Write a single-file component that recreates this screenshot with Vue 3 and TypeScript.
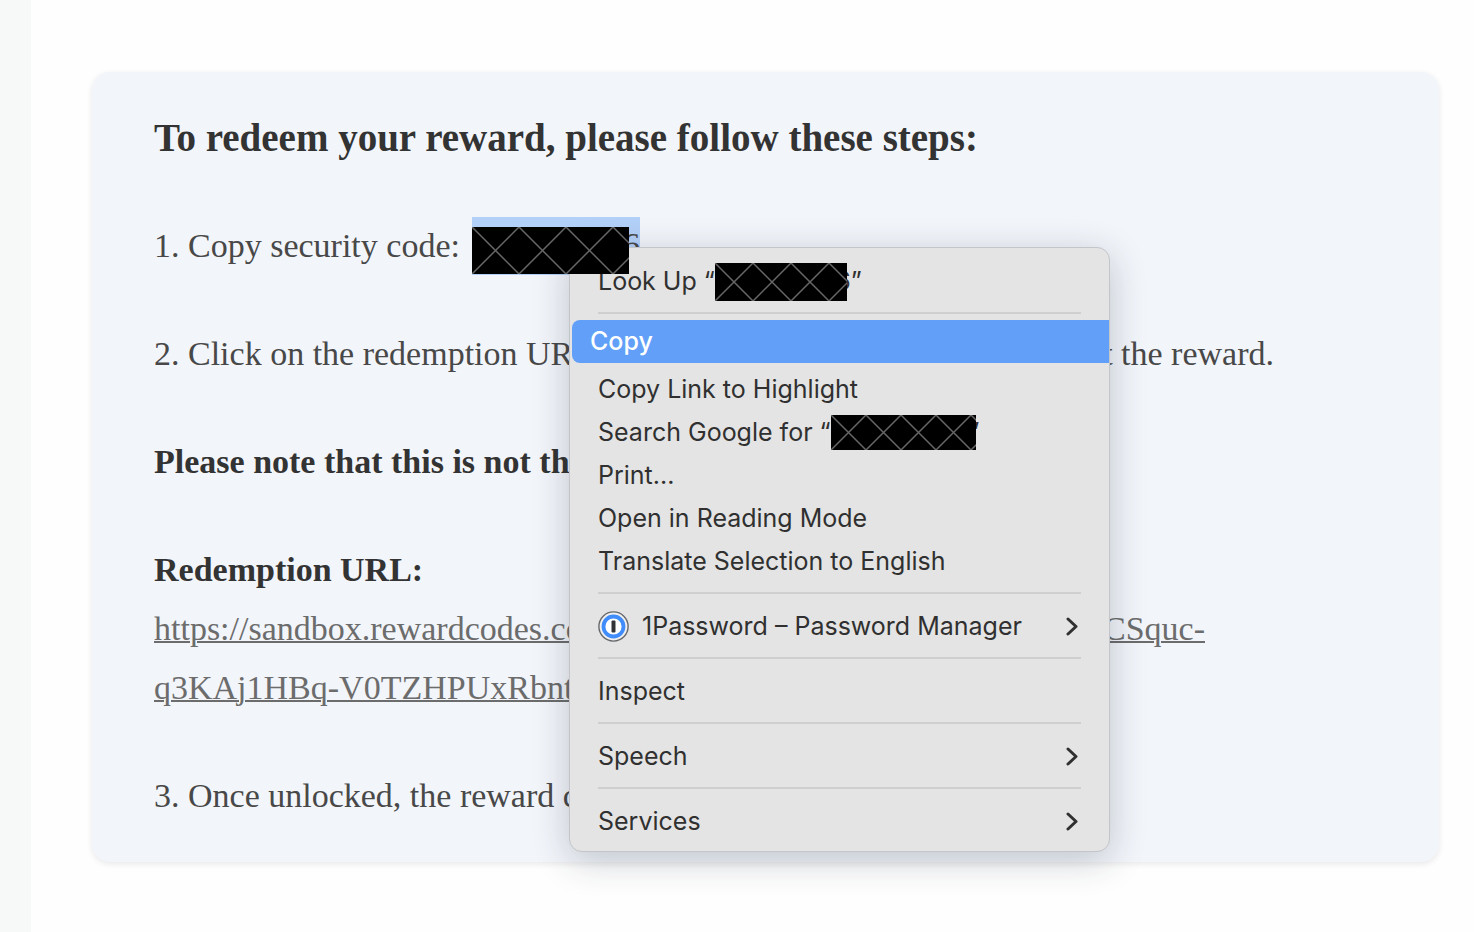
<script setup lang="ts">
import { defineComponent, h } from 'vue'

const Redaction = defineComponent({
  props: {
    width: { type: Number, required: true },
    height: { type: Number, required: true },
  },
  setup(props) {
    return () => {
      const { width, height } = props
      let d = ''
      for (let x = 0; x < width; x += height) {
        d += `M${x} 0l${height} ${height}M${x} ${height}l${height} ${-height}`
      }
      return h('svg', { width, height, viewBox: `0 0 ${width} ${height}`, 'aria-label': 'Redacted', role: 'img' }, [
        h('rect', { width, height, fill: '#000' }),
        h('path', { d, stroke: '#666', 'stroke-width': 1.5, fill: 'none' }),
      ])
    }
  },
})
</script>

<template>
  <div class="page">
    <main class="sheet">
      <section class="card">
        <h1>To redeem your reward, please follow these steps:</h1>
        <p class="code">
          <span>1. Copy security code:</span>
          <span class="selection"><Redaction class="cover" :width="157" :height="47" /><span class="digit">6</span></span>
        </p>
        <p class="split step">
          <span>2. Click on the redemption URL</span>
          <span>t the reward.</span>
        </p>
        <p><strong>Please note that this is not the</strong></p>
        <div class="link-block">
          <strong>Redemption URL:</strong>
          <a href="#redeem">
            <span class="split url"><span>https://sandbox.rewardcodes.co</span><span>CSquc-</span></span>
            <span>q3KAj1HBq-V0TZHPUxRbnt</span>
          </a>
        </div>
        <p>3. Once unlocked, the reward c</p>
      </section>
    </main>

    <div class="menu" role="menu">
      <button role="menuitem">Look Up “<Redaction class="cover" :width="132" :height="38" /><span class="tail">6</span>”</button>
      <hr />
      <button role="menuitem" class="active">Copy</button>
      <button role="menuitem">Copy Link to Highlight</button>
      <button role="menuitem">Search Google for “<Redaction class="cover" :width="145" :height="35" /><span class="quote">”</span></button>
      <button role="menuitem">Print...</button>
      <button role="menuitem">Open in Reading Mode</button>
      <button role="menuitem">Translate Selection to English</button>
      <hr />
      <button role="menuitem">
        <svg class="logo" width="32" height="32" viewBox="0 0 32 32" aria-hidden="true">
          <circle cx="15.5" cy="15.5" r="14.6" fill="#f0f0f0" stroke="#66686b" stroke-width="1.4" />
          <circle cx="15.5" cy="15.5" r="10" fill="#fff" stroke="#3f8cfa" stroke-width="3.8" />
          <rect x="13.5" y="9.5" width="4" height="12" rx="1" fill="#303236" />
        </svg>
        <span>1Password – Password Manager</span>
        <svg class="chevron" width="14" height="20" viewBox="0 0 14 20" aria-hidden="true"><path d="M3 2l8 7.5L3 17" /></svg>
      </button>
      <hr />
      <button role="menuitem">Inspect</button>
      <hr />
      <button role="menuitem">
        <span>Speech</span>
        <svg class="chevron" width="14" height="20" viewBox="0 0 14 20" aria-hidden="true"><path d="M3 2l8 7.5L3 17" /></svg>
      </button>
      <hr />
      <button role="menuitem">
        <span>Services</span>
        <svg class="chevron" width="14" height="20" viewBox="0 0 14 20" aria-hidden="true"><path d="M3 2l8 7.5L3 17" /></svg>
      </button>
    </div>
  </div>
</template>

<style>
body {
  margin: 0;
  background: #fefefe;
}
</style>

<style scoped>
.page {
  position: relative;
  min-height: 100vh;
  box-sizing: border-box;
  border-left: 31px solid #f7f9f8;
  overflow: hidden;
}
.sheet {
  padding: 72px 35px 70px 61px;
}
.card {
  box-sizing: border-box;
  padding: 36px 62px 37px;
  border-radius: 18px;
  background: #f2f5fa;
  box-shadow: 0 2px 6px rgba(0, 0, 0, 0.09);
  font-family: "Liberation Serif", "Times New Roman", serif;
  font-size: 34px;
  line-height: 59px;
  color: #484848;
}
h1 {
  margin: 0 0 49px;
  font-size: 39px;
  line-height: 59px;
  color: #333;
  white-space: nowrap;
}
p,
.link-block {
  margin: 0 0 49px;
  white-space: nowrap;
}
.card p:last-child {
  margin-bottom: 0;
}
strong {
  display: block;
  color: #333;
}
.code {
  display: flex;
  align-items: flex-end;
  gap: 12px;
}
.split {
  display: flex;
  justify-content: space-between;
}
.step {
  max-width: 1120px;
}
.url {
  max-width: 1051px;
}
a {
  display: block;
  color: #6c6c6c;
  text-decoration: underline;
  text-decoration-thickness: 2px;
}
.selection {
  display: flex;
  box-sizing: border-box;
  align-items: flex-end;
  width: 168px;
  height: 58px;
  padding-bottom: 1px;
  background: #b3d0f8;
}
.cover {
  position: relative;
  z-index: 2;
  flex: none;
}
.digit {
  display: flex;
  justify-content: flex-end;
  align-self: flex-start;
  width: 11px;
  line-height: 56px;
}
.menu {
  position: absolute;
  top: 247px;
  left: 538px;
  box-sizing: border-box;
  width: 541px;
  padding: 12px 0 8px;
  border: 1px solid #c3c5c9;
  border-radius: 13px;
  background: #e4e4e4;
  box-shadow: 0 8px 36px rgba(30, 40, 60, 0.24);
  z-index: 1;
}
button {
  display: flex;
  align-items: center;
  width: 100%;
  height: 43px;
  margin: 0;
  padding: 0 30px 0 28px;
  border: 0;
  background: none;
  font-family: Inter, "Noto Sans", sans-serif;
  font-size: 25px;
  line-height: 43px;
  color: #303030;
  text-align: left;
  white-space: pre-wrap;
}
.active {
  width: calc(100% - 2px);
  margin: -5px 0 5px 2px;
  padding-left: 18px;
  border-radius: 8px 0 0 8px;
  background: #629ff8;
  color: #fff;
  font-weight: 500;
}
hr {
  height: 2px;
  margin: 9px 28px 11px;
  border: 0;
  background: #cfcfcf;
}
.tail,
.quote {
  display: flex;
  justify-content: flex-end;
  width: 4px;
}
.logo {
  margin-right: 12px;
}
.chevron {
  margin-left: auto;
  fill: none;
  stroke: #303030;
  stroke-width: 3;
  stroke-linecap: round;
  stroke-linejoin: round;
}
</style>
